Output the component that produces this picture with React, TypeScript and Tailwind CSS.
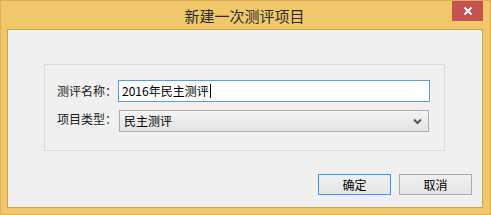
import React from "react";

const font = { fontFamily: '"Noto Sans CJK SC", "Noto Sans", sans-serif' };

export default function App() {
  return (
    <div
      className="relative w-[491px] h-[215px] bg-[#f0c86a] border border-[#d9b060] flex flex-col pl-[6px] pr-[7px] pb-[6px] overflow-hidden"
      style={font}
    >
      <div className="h-[28px] flex items-center justify-center text-[15px] text-[#2b2b2b] leading-none pr-[1px]">
        新建一次测评项目
      </div>
      <div className="absolute right-[7px] top-0 w-[31px] h-[20px] bg-[#c75050] flex items-center justify-center">
        <svg width="10" height="10" viewBox="0 0 10 10">
          <path d="M1.5 1.5 L8.5 8.5 M8.5 1.5 L1.5 8.5" stroke="#ffffff" strokeWidth="2" />
        </svg>
      </div>
      <div className="flex-1 bg-[#f0f0f0] border border-[#c9a550] flex flex-col pt-[34px] pl-[36px] pr-[10px]">
        <div className="w-[401px] h-[87px] border border-[#dcdcdc] flex flex-col pt-[15px] pl-[12px] gap-[8px]">
          <div className="flex items-center h-[22px]">
            <div className="w-[61px] text-[12px] text-[#1a1a1a] leading-none">测评名称：</div>
            <div className="w-[312px] h-[22px] bg-white border border-[#569de5] flex items-center pl-[3px] text-[12px] text-black leading-none">
              <span>2016年民主测评</span>
              <span className="w-[1px] h-[14px] bg-black ml-[1px]" />
            </div>
          </div>
          <div className="flex items-center h-[22px]">
            <div className="w-[62px] text-[12px] text-[#1a1a1a] leading-none -mt-[4px]">项目类型：</div>
            <div className="w-[310px] h-[22px] bg-gradient-to-b from-[#f3f3f3] to-[#e4e4e4] border border-[#acacac] flex items-center pl-[4px] pr-[6px] text-[12px] text-black leading-none">
              <span className="flex-1">民主测评</span>
              <svg width="9" height="7" viewBox="0 0 9 7">
                <path d="M1 1.5 L4.5 5 L8 1.5" stroke="#555555" strokeWidth="2" fill="none" />
              </svg>
            </div>
          </div>
        </div>
        <div className="flex justify-end gap-[8px] mt-[23px]">
          <div className="w-[73px] h-[21px] border border-[#3399ff] bg-gradient-to-b from-[#f0f0f0] to-[#e5e5e5] flex items-center justify-center text-[12px] text-black leading-none">
            确定
          </div>
          <div className="w-[73px] h-[21px] border border-[#acacac] bg-gradient-to-b from-[#f0f0f0] to-[#e5e5e5] flex items-center justify-center text-[12px] text-black leading-none">
            取消
          </div>
        </div>
      </div>
    </div>
  );
}
